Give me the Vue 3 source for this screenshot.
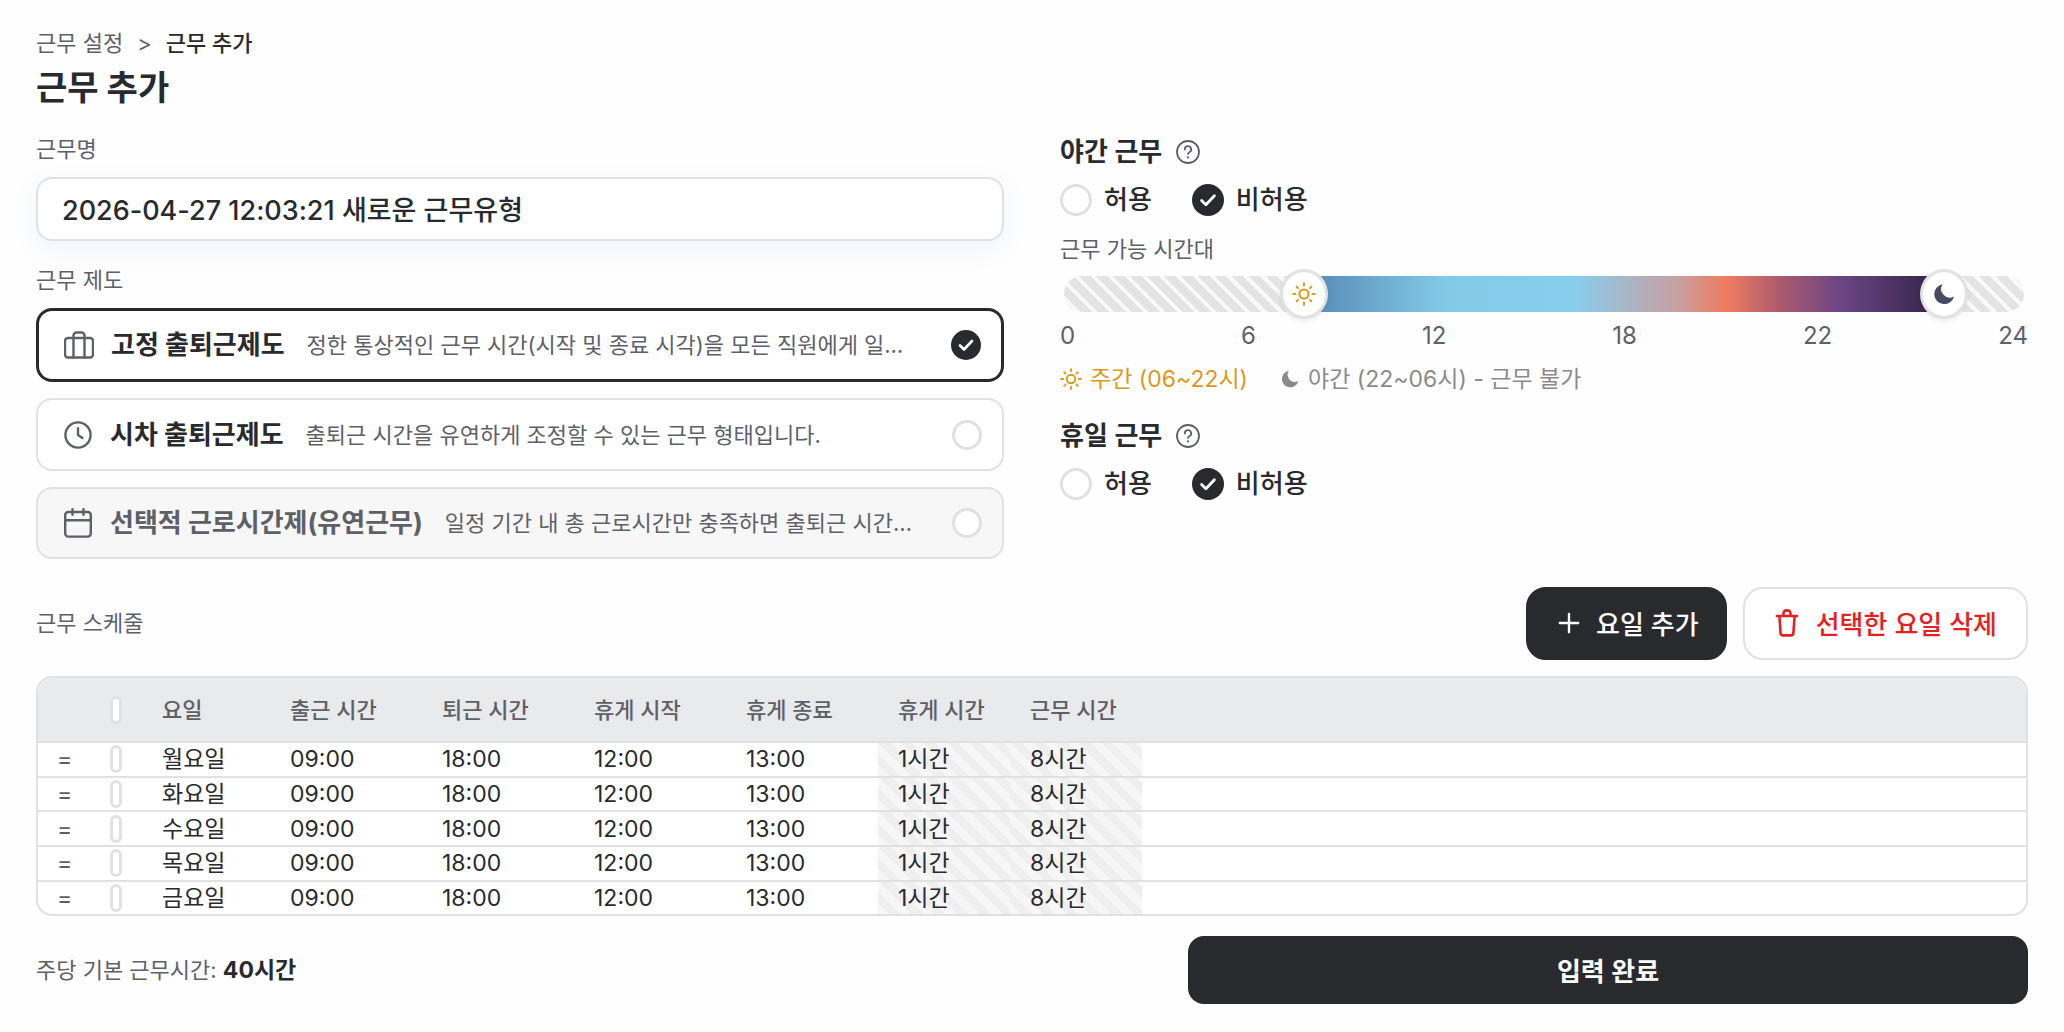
<script setup>
import { ref, computed } from 'vue'

const workName = ref('2026-04-27 12:03:21 새로운 근무유형')
const system = ref('fixed')
const start = ref(6)
const end = ref(22)

const systems = [
  { id: 'fixed', icon: 'bag', title: '고정 출퇴근제도', desc: '정한 통상적인 근무 시간(시작 및 종료 시각)을 모든 직원에게 일괄 적용합니다.' },
  { id: 'stagger', icon: 'clock', title: '시차 출퇴근제도', desc: '출퇴근 시간을 유연하게 조정할 수 있는 근무 형태입니다.' },
  { id: 'flex', icon: 'calendar', title: '선택적 근로시간제(유연근무)', desc: '일정 기간 내 총 근로시간만 충족하면 출퇴근 시간을 조정합니다.', disabled: true },
]

const allows = ref({ night: 'no', holiday: 'no' })
const options = [
  { value: 'yes', label: '허용' },
  { value: 'no', label: '비허용' },
]
const ticks = [0, 6, 12, 18, 22, 24]

const columns = ['요일', '출근 시간', '퇴근 시간', '휴게 시작', '휴게 종료', '휴게 시간', '근무 시간']
const days = ref(
  ['월요일', '화요일', '수요일', '목요일', '금요일'].map((name) => ({
    name, checked: false, times: ['09:00', '18:00', '12:00', '13:00'], rest: 1, work: 8,
  }))
)

const allChecked = computed({
  get: () => days.value.length > 0 && days.value.every((d) => d.checked),
  set: (v) => days.value.forEach((d) => { d.checked = v }),
})
const total = computed(() => days.value.reduce((sum, d) => sum + d.work, 0))
const pct = (h) => `${(h / 24) * 100}%`

function addDay() {
  const rest = ['토요일', '일요일'].find((n) => !days.value.some((d) => d.name === n))
  if (rest) days.value.push({ name: rest, checked: false, times: ['09:00', '18:00', '12:00', '13:00'], rest: 1, work: 8 })
}
function removeDays() {
  days.value = days.value.filter((d) => !d.checked)
}
</script>

<template>
  <main class="page">
    <!-- 공용 아이콘 -->
    <svg class="defs" aria-hidden="true">
      <symbol id="sun" viewBox="0 0 24 24">
        <g fill="none" stroke="currentColor" stroke-width="2" stroke-linecap="round">
          <circle cx="12" cy="12" r="4.6" />
          <path d="M12 1.2v2.4M12 20.4v2.4M1.2 12h2.4M20.4 12h2.4M4.6 4.6l1.5 1.5M17.9 17.9l1.5 1.5M4.6 19.4l1.5-1.5M17.9 6.1l1.5-1.5" />
        </g>
      </symbol>
      <symbol id="moon" viewBox="0 0 24 24">
        <path fill="currentColor" d="M10.6 2.2A10 10 0 1 0 22 14.4 8.6 8.6 0 0 1 10.6 2.2Z" />
      </symbol>
      <symbol id="help" viewBox="0 0 24 24">
        <circle cx="12" cy="12" r="11" fill="none" stroke="currentColor" stroke-width="1.8" />
        <path d="M8.8 9.4a3.2 3.2 0 1 1 4.7 2.8c-1 .6-1.5 1-1.5 1.9" fill="none" stroke="currentColor" stroke-width="1.8" stroke-linecap="round" />
        <circle cx="12" cy="17.4" r="1.1" fill="currentColor" />
      </symbol>
    </svg>

    <header>
      <nav class="crumbs">
        <a href="#">근무 설정</a>
        <span>&gt;</span>
        <strong>근무 추가</strong>
      </nav>
      <h1>근무 추가</h1>
    </header>

    <div class="cols">
      <section class="left">
        <label class="label" for="work-name">근무명</label>
        <input id="work-name" v-model="workName" class="name" type="text" />

        <span id="system-label" class="label">근무 제도</span>
        <div class="systems" role="radiogroup" aria-labelledby="system-label">
          <label
            v-for="s in systems" :key="s.id"
            class="system" :class="{ on: system === s.id, off: s.disabled }"
          >
            <svg v-if="s.icon === 'bag'" class="sys-icon bag" viewBox="0 0 30 28">
              <rect x="1" y="7" width="28" height="19.5" rx="3" />
              <path d="M9.5 26.5V4.5a3 3 0 0 1 3-3h5a3 3 0 0 1 3 3v22" />
            </svg>
            <svg v-else-if="s.icon === 'clock'" class="sys-icon" viewBox="0 0 28 28">
              <circle cx="14" cy="14" r="12.6" />
              <path d="M14 7.2V14l4.4 3" />
            </svg>
            <svg v-else class="sys-icon" viewBox="0 0 28 30">
              <rect x="1.2" y="4" width="25.6" height="24.6" rx="3" />
              <path d="M1.2 12.2h25.6M8.5 1.2v5.6M19.5 1.2v5.6" />
            </svg>
            <b>{{ s.title }}</b>
            <span class="desc">{{ s.desc }}</span>
            <input v-model="system" class="radio" type="radio" name="system" :value="s.id" :disabled="s.disabled" />
          </label>
        </div>
      </section>

      <section class="right">
        <h2>야간 근무 <svg class="help"><use href="#help" /></svg></h2>
        <div class="options">
          <label v-for="o in options" :key="o.value">
            <input v-model="allows.night" class="radio big" type="radio" name="night" :value="o.value" />{{ o.label }}
          </label>
        </div>

        <span class="label">근무 가능 시간대</span>
        <div class="slider">
          <div class="track">
            <div class="sky" :style="{ left: pct(start), width: pct(end - start) }"></div>
          </div>
          <button class="thumb sun" type="button" aria-label="시작 시간" :style="{ left: pct(start) }">
            <svg><use href="#sun" /></svg>
          </button>
          <button class="thumb moon" type="button" aria-label="종료 시간" :style="{ left: pct(end) }">
            <svg><use href="#moon" /></svg>
          </button>
        </div>
        <div class="ticks">
          <span v-for="t in ticks" :key="t">{{ t }}</span>
        </div>
        <div class="legend">
          <span class="day"><svg><use href="#sun" /></svg>주간 (06~22시)</span>
          <span class="night"><svg><use href="#moon" /></svg>야간 (22~06시) - 근무 불가</span>
        </div>

        <h2>휴일 근무 <svg class="help"><use href="#help" /></svg></h2>
        <div class="options">
          <label v-for="o in options" :key="o.value">
            <input v-model="allows.holiday" class="radio big" type="radio" name="holiday" :value="o.value" />{{ o.label }}
          </label>
        </div>
      </section>
    </div>

    <div class="bar">
      <span class="label">근무 스케줄</span>
      <button class="btn dark" type="button" @click="addDay">
        <svg class="plus" viewBox="0 0 24 24"><path d="M12 2v20M2 12h20" /></svg>
        요일 추가
      </button>
      <button class="btn danger" type="button" @click="removeDays">
        <svg class="trash" viewBox="0 0 24 28">
          <path d="M2 7h20M4.4 7l1.2 17.2a2.4 2.4 0 0 0 2.4 2.2h8a2.4 2.4 0 0 0 2.4-2.2L19.6 7M8.5 7V4.4a3 3 0 0 1 3-3h1a3 3 0 0 1 3 3V7" />
        </svg>
        선택한 요일 삭제
      </button>
    </div>

    <div class="table-wrap">
      <table>
        <colgroup>
          <col class="c-s" /><col class="c-s" /><col class="c-day" />
          <col v-for="i in 4" :key="i" class="c-time" />
          <col class="c-sum" /><col class="c-sum" /><col />
        </colgroup>
        <thead>
          <tr>
            <th></th>
            <th><input v-model="allChecked" class="check" type="checkbox" aria-label="전체 선택" /></th>
            <th v-for="c in columns" :key="c">{{ c }}</th>
            <th></th>
          </tr>
        </thead>
        <tbody>
          <tr v-for="d in days" :key="d.name">
            <td class="drag">=</td>
            <td><input v-model="d.checked" class="check" type="checkbox" :aria-label="d.name" /></td>
            <td>{{ d.name }}</td>
            <td v-for="(t, i) in d.times" :key="i">{{ t }}</td>
            <td class="stripe">{{ d.rest }}시간</td>
            <td class="stripe">{{ d.work }}시간</td>
            <td></td>
          </tr>
        </tbody>
      </table>
    </div>

    <footer>
      <span>주당 기본 근무시간: <b>{{ total }}시간</b></span>
      <button class="submit" type="button">입력 완료</button>
    </footer>
  </main>
</template>

<style>
body { margin: 0; background: #fefefe; }
</style>

<style scoped>
.page {
  box-sizing: border-box;
  padding: 27px 36px 28px;
  color: #292a2e;
  font: 400 22px/32px Inter, "Noto Sans CJK KR", sans-serif;
}
.page * { box-sizing: border-box; }
.page button, .page input { margin: 0; font-family: inherit; }
.page svg { flex: none; }
.defs { position: absolute; width: 0; height: 0; }

.crumbs { display: flex; gap: 14px; color: #5e6068; }
.crumbs a { color: inherit; text-decoration: none; }
.crumbs strong { color: #292a2e; font-weight: 500; }
h1 { margin: 7px 0 0; font-size: 34px; line-height: 44px; font-weight: 700; }

.cols { display: grid; grid-template-columns: 1fr 1fr; gap: 56px; margin-top: 23px; }
.left, .right { display: flex; flex-direction: column; min-width: 0; }
.label { color: #5e6068; }

.page .name {
  height: 64px;
  margin: 12px 0 23px;
  padding: 0 24px 2px;
  border: 2px solid #e0e1e3;
  border-radius: 16px;
  background: #fff;
  box-shadow: 0 8px 24px rgba(60, 140, 220, .08);
  color: #292a2e;
  font-size: 27px;
  font-weight: 500;
  outline: none;
}

.systems { display: flex; flex-direction: column; gap: 16px; margin-top: 12px; }
.system {
  display: flex;
  align-items: center;
  height: 73px;
  padding: 0 20px 0 26px;
  border: 2px solid #e0e1e3;
  border-radius: 16px;
  background: #fff;
  cursor: pointer;
}
.system.on { height: 74px; border: 3px solid #292a2e; padding: 0 20px 0 25px; }
.system.off { height: 72px; background: #f7f7f7; }
.sys-icon { width: 28px; height: 30px; margin-right: 18px; fill: none; stroke: #5e6068; stroke-width: 2.4; stroke-linecap: round; stroke-linejoin: round; }
.sys-icon.bag { width: 30px; margin-right: 17px; }
.system b { flex: none; margin-right: 22px; font-size: 26px; font-weight: 700; }
.system.off b { color: #5e6068; }
.desc { flex: 1; min-width: 0; margin-right: 32px; overflow: hidden; color: #5e6068; white-space: nowrap; text-overflow: ellipsis; }

.radio {
  flex: none;
  width: 30px;
  height: 30px;
  border: 3px solid #e0e1e3;
  border-radius: 50%;
  background: #fff;
  appearance: none;
}
.radio:checked {
  border: 0;
  background: #292a2e url("data:image/svg+xml,%3Csvg xmlns='http://www.w3.org/2000/svg' viewBox='0 0 30 30'%3E%3Cpath d='M9 15.5l4 4 8-8.5' fill='none' stroke='%23fff' stroke-width='2.6' stroke-linecap='round' stroke-linejoin='round'/%3E%3C/svg%3E") center / 100%;
}
.radio.big { width: 32px; height: 32px; }

h2 { display: flex; align-items: center; gap: 14px; margin: 3px 0 0; font-size: 26px; line-height: 32px; font-weight: 600; }
.help { width: 24px; height: 24px; color: #5e6068; }
.options { display: flex; gap: 40px; margin: 16px 0 17px; font-size: 26px; font-weight: 500; }
.options label { display: flex; align-items: center; gap: 12px; }

.slider { position: relative; height: 36px; margin: 11px 4px 0; }
.track {
  position: relative;
  height: 100%;
  overflow: hidden;
  border-radius: 18px;
  background: repeating-linear-gradient(45deg, #e4e4e4 0 8px, #f9f9f9 8px 12px);
}
.sky {
  position: absolute;
  inset: 0 auto 0 0;
  background: linear-gradient(90deg, #5488b4, #83cae7 22%, #87ceed 42%, #c5a2a4 58%, #f07c60 66%, #ae5c6c 74%, #6b4585 84%, #2f2343);
}
.thumb {
  display: grid;
  place-items: center;
  position: absolute;
  top: -7px;
  width: 48px;
  height: 50px;
  padding: 0;
  border: 3px solid #e0e1e3;
  border-radius: 50%;
  background: #fff;
  box-shadow: 0 2px 4px rgba(0, 0, 0, .08);
  transform: translateX(-50%);
}
.thumb svg { width: 24px; height: 24px; }
.day, .thumb.sun { color: #d9981c; }
.thumb.moon { color: #494a63; }
.ticks { display: flex; justify-content: space-between; margin-top: 8px; color: #5e6068; font-size: 24px; }
.legend { display: flex; gap: 32px; margin: 11px 0 22px; font-size: 23px; }
.legend span { display: flex; align-items: center; gap: 8px; }
.legend svg { width: 22px; height: 22px; }
.legend .night { color: #8a8a8a; }
.legend .night svg { width: 20px; height: 20px; }

.bar { display: flex; align-items: center; gap: 16px; margin: 28px 0 16px; }
.bar .label { flex: 1; padding-bottom: 2px; }
.btn {
  display: flex;
  align-items: center;
  height: 73px;
  border: 2px solid #292a2e;
  border-radius: 20px;
  font-size: 26px;
  font-weight: 500;
  cursor: pointer;
}
.btn svg { fill: none; stroke: currentColor; stroke-width: 2.6; stroke-linecap: round; stroke-linejoin: round; }
.dark { padding: 0 26px 2px 30px; background: #292a2e; color: #fff; }
.danger { padding: 0 29px 2px 30px; border-color: #e0e1e3; background: #fff; color: #e5201f; }
.plus { width: 22px; height: 24px; margin-right: 16px; }
.trash { width: 24px; height: 28px; margin-right: 17px; }

.table-wrap { overflow: hidden; border: 2px solid #e0e1e3; border-radius: 16px; background: #fff; }
table { width: 100%; height: 236px; border-spacing: 0; table-layout: fixed; }
.c-s { width: 52px; }
.c-day { width: 128px; }
.c-time { width: 152px; }
.c-sum { width: 132px; }
thead tr { height: 65px; }
th, td { padding: 0 20px; border-bottom: 2px solid #e0e1e3; text-align: left; line-height: 28px; white-space: nowrap; }
th { background: #e9eaeb; color: #5e6068; font-weight: 500; }
td { font-size: 23px; }
tbody tr:last-child td { border-bottom: 0; }
.drag { padding: 0 0 0 19px; color: #5e6068; }
.check {
  display: block;
  width: 12px;
  height: 28px;
  border: 3px solid #e0e1e3;
  border-radius: 6px;
  background: #fff;
  appearance: none;
}
.check:checked { background: #292a2e; }
.stripe { background: repeating-linear-gradient(45deg, #f7f7f7 0 8px, #efefef 8px 16px); }

footer { display: flex; align-items: center; justify-content: space-between; gap: 24px; margin-top: 20px; color: #5e6068; }
footer b { color: #292a2e; font-size: 23px; font-weight: 700; }
.submit {
  width: 840px;
  height: 68px;
  padding: 0 0 2px;
  border: 0;
  border-radius: 16px;
  background: #292a2e;
  color: #fff;
  font-size: 26px;
  font-weight: 600;
  cursor: pointer;
}
</style>
